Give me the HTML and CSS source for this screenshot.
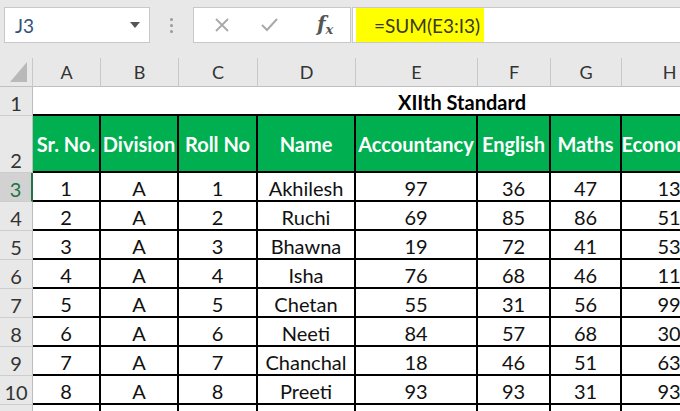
FILE: index.html
```html
<!DOCTYPE html>
<html>
<head>
<meta charset="utf-8">
<link rel="stylesheet" href="styles.css">
</head>
<body>
<div class="toolbar">
  <div class="namebox"><span class="ref">J3</span><span class="caret"></span></div>
  <div class="dots"><i></i><i></i><i></i></div>
  <div class="fxbox">
    <svg class="ico" width="18" height="18" viewBox="0 0 18 18"><path d="M3 3 L15 15 M15 3 L3 15" stroke="#a9a9a9" stroke-width="1.8" fill="none"/></svg>
    <svg class="ico" width="20" height="18" viewBox="0 0 20 18"><path d="M3 9 L8 14 L18 3" stroke="#a9a9a9" stroke-width="2" fill="none"/></svg>
    <span class="fx">f<sub>x</sub></span>
  </div>
  <div class="formula"><span class="hl">=SUM(E3:I3)</span></div>
</div>
<div class="sheet">
  <div class="corner"><svg width="33" height="29" viewBox="0 0 33 29"><polygon points="27,4 27,24 10,24" fill="#b9b9b9"/></svg></div>
  <div class="ch">A</div><div class="ch">B</div><div class="ch">C</div><div class="ch">D</div><div class="ch">E</div><div class="ch">F</div><div class="ch">G</div><div class="ch">H</div>

  <div class="rh">1</div>
  <div class="title"><span>XIIth Standard</span></div>

  <div class="rh">2</div>
  <div class="hd">Sr. No.</div><div class="hd">Division</div><div class="hd">Roll No</div><div class="hd">Name</div><div class="hd">Accountancy</div><div class="hd">English</div><div class="hd">Maths</div><div class="hd">Economics</div>

  <div class="rh sel">3</div>
  <div class="c">1</div><div class="c">A</div><div class="c">1</div><div class="c">Akhilesh</div><div class="c">97</div><div class="c">36</div><div class="c">47</div><div class="c">13</div>
  <div class="rh">4</div>
  <div class="c">2</div><div class="c">A</div><div class="c">2</div><div class="c">Ruchi</div><div class="c">69</div><div class="c">85</div><div class="c">86</div><div class="c">51</div>
  <div class="rh">5</div>
  <div class="c">3</div><div class="c">A</div><div class="c">3</div><div class="c">Bhawna</div><div class="c">19</div><div class="c">72</div><div class="c">41</div><div class="c">53</div>
  <div class="rh">6</div>
  <div class="c">4</div><div class="c">A</div><div class="c">4</div><div class="c">Isha</div><div class="c">76</div><div class="c">68</div><div class="c">46</div><div class="c">11</div>
  <div class="rh">7</div>
  <div class="c">5</div><div class="c">A</div><div class="c">5</div><div class="c">Chetan</div><div class="c">55</div><div class="c">31</div><div class="c">56</div><div class="c">99</div>
  <div class="rh">8</div>
  <div class="c">6</div><div class="c">A</div><div class="c">6</div><div class="c">Neeti</div><div class="c">84</div><div class="c">57</div><div class="c">68</div><div class="c">30</div>
  <div class="rh">9</div>
  <div class="c">7</div><div class="c">A</div><div class="c">7</div><div class="c">Chanchal</div><div class="c">18</div><div class="c">46</div><div class="c">51</div><div class="c">63</div>
  <div class="rh">10</div>
  <div class="c">8</div><div class="c">A</div><div class="c">8</div><div class="c">Preeti</div><div class="c">93</div><div class="c">93</div><div class="c">31</div><div class="c">93</div>
  <div class="rh"></div>
  <div class="c"></div><div class="c"></div><div class="c"></div><div class="c"></div><div class="c"></div><div class="c"></div><div class="c"></div><div class="c"></div>
</div>
</body>
</html>
```
FILE: styles.css
```css
* { box-sizing: border-box; }
html, body { margin: 0; padding: 0; }
body {
  width: 680px;
  height: 411px;
  overflow: hidden;
  background: #e8e8e8;
  font-family: Lato, "Liberation Sans", sans-serif;
}
.toolbar {
  height: 58px;
  display: flex;
  align-items: flex-start;
  padding: 7px 0 0 4px;
}
.namebox {
  width: 146px;
  height: 36px;
  background: #fff;
  border: 1px solid #c8c8c8;
  display: flex;
  align-items: center;
  justify-content: space-between;
  padding: 0 9px 0 10px;
}
.ref { font-size: 19px; color: #34527a; }
.caret {
  width: 0; height: 0;
  border-left: 5px solid transparent;
  border-right: 5px solid transparent;
  border-top: 6px solid #555;
}
.dots {
  width: 4px;
  margin: 11px 19px 0 20px;
  display: flex;
  flex-direction: column;
  gap: 3px;
}
.dots i { display: block; width: 3px; height: 3px; border-radius: 50%; background: #9a9a9a; }
.fxbox {
  width: 158px;
  height: 36px;
  background: #fff;
  border: 1px solid #c8c8c8;
  display: flex;
  align-items: center;
  padding-left: 19px;
}
.fxbox .ico:nth-child(2) { margin-left: 28px; }
.fx {
  margin-left: 38px;
  font-family: "DejaVu Serif", "Liberation Serif", serif;
  font-style: italic;
  font-weight: bold;
  font-size: 20px;
  color: #555;
  line-height: 1;
}
.fx sub { font-size: 13px; vertical-align: -3px; }
.formula {
  flex: 1;
  height: 36px;
  margin-left: 1px;
  background: #fff;
  border: 1px solid #c8c8c8;
  border-right: 0;
  padding-left: 3px;
}
.hl {
  display: flex;
  align-items: center;
  width: 128px;
  height: 34px;
  background: #ffff00;
  padding-left: 18px;
  font-size: 19px;
  color: #3a3a20;
}
.sheet {
  display: grid;
  grid-template-columns: 33px 68px 78px 79px 98px 122px 73px 71px 96px;
  grid-template-rows: 29px 29px 57px repeat(9, 29px);
  width: 718px;
  background: #fff;
}
.corner { background: #e8e8e8; border-right: 1px solid #c8c8c8; border-bottom: 1px solid #c0c0c0; }
.corner svg { display: block; }
.ch {
  background: #e8e8e8;
  border-right: 1px solid #c8c8c8;
  border-bottom: 1px solid #c0c0c0;
  display: flex;
  align-items: center;
  justify-content: center;
  font-size: 18px;
  color: #333;
}
.rh {
  background: #e8e8e8;
  border-right: 1px solid #bdbdbd;
  border-bottom: 1px solid #cdcdcd;
  display: flex;
  align-items: flex-end;
  justify-content: center;
  padding-bottom: 0;
  font-size: 20px;
  color: #333;
}
.rh.sel { background: #d2d2d2; color: #217346; border-right: 2px solid #217346; }
.title {
  grid-column: 2 / -1;
  border-bottom: 2px solid #000;
  display: flex;
  align-items: center;
  padding-left: 365px;
  padding-top: 3px;
  font-weight: bold;
  font-size: 20px;
  color: #000;
}
.hd {
  background: #00b050;
  border-right: 2px solid #000;
  border-bottom: 2px solid #000;
  display: flex;
  align-items: center;
  justify-content: center;
  font-weight: bold;
  font-size: 20px;
  color: #fff;
  white-space: nowrap;
  overflow: hidden;
}
.c {
  border-right: 2px solid #000;
  border-bottom: 2px solid #000;
  display: flex;
  align-items: flex-end;
  justify-content: center;
  padding-bottom: 0;
  font-size: 20px;
  color: #111;
  white-space: nowrap;
}
```
